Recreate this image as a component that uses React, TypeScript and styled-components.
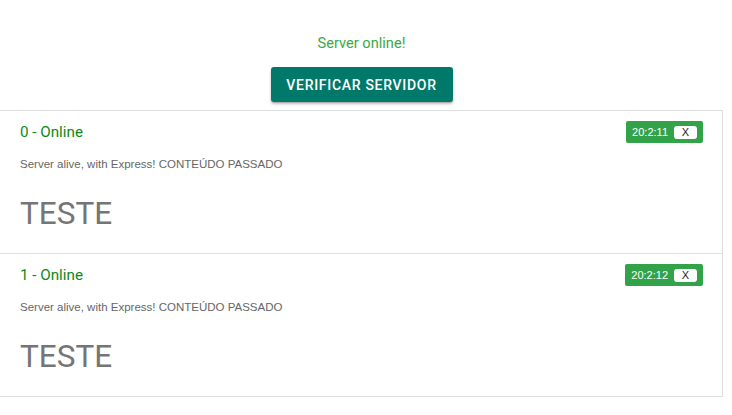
import React from "react";
import styled, { createGlobalStyle } from "styled-components";

const Global = createGlobalStyle`
  html, body { margin: 0; padding: 0; background: #fff; }
  body { font-family: Roboto, "Liberation Sans", Arial, sans-serif; }
`;

const Page = styled.div`
  width: 723px;
  display: flex;
  flex-direction: column;
  align-items: center;
`;

const Status = styled.div`
  margin-top: 34px;
  height: 18px;
  line-height: 18px;
  font-size: 14.6px;
  color: #3aa845;
  font-family: Roboto, sans-serif;
`;

const VerifyButton = styled.button`
  margin-top: 15px;
  width: 182px;
  height: 35px;
  border: none;
  border-radius: 3px;
  background: #00796b;
  color: #fff;
  font-family: Roboto, sans-serif;
  font-size: 14px;
  font-weight: 500;
  letter-spacing: 0.7px;
  text-transform: uppercase;
  box-shadow: 0 2px 3px rgba(0,0,0,0.25), 0 1px 1px rgba(0,0,0,0.14);
  cursor: pointer;
`;

const List = styled.ul`
  list-style: none;
  margin: 8px 0 0 -1px;
  padding: 0;
  width: 724px;
  border: 1px solid #dedede;
  box-sizing: border-box;
`;

const Item = styled.li<{ $last?: boolean }>`
  height: ${(p) => (p.$last ? "142px" : "143px")};
  padding: 10px 19px 0 20px;
  box-sizing: border-box;
  border-bottom: ${(p) => (p.$last ? "none" : "1px solid #dedede")};
  display: flex;
  flex-direction: column;
`;

const Header = styled.div`
  display: flex;
  align-items: center;
  justify-content: space-between;
  height: 22px;
`;

const Title = styled.span`
  font-family: Roboto, sans-serif;
  font-size: 15.2px;
  color: #0b8a16;
`;

const Badge = styled.span`
  display: inline-flex;
  align-items: center;
  gap: 6px;
  height: 22px;
  padding: 0 6px;
  box-sizing: border-box;
  background: #33a34a;
  color: #fff;
  border-radius: 2px;
  font-family: "Liberation Sans", Arial, sans-serif;
  font-size: 11px;
`;

const CloseButton = styled.button`
  width: 23px;
  height: 13px;
  padding: 0;
  border: none;
  border-radius: 3px;
  background: #fff;
  color: #222;
  font-family: "Liberation Sans", Arial, sans-serif;
  font-size: 11px;
  line-height: 13px;
  cursor: pointer;
`;

const Description = styled.p`
  margin: 14px 0 0 0;
  font-family: "Liberation Sans", Arial, sans-serif;
  font-size: 11.5px;
  color: #666;
  line-height: 14px;
`;

const Big = styled.div`
  margin-top: 25px;
  font-family: Roboto, sans-serif;
  font-size: 31.5px;
  line-height: 36px;
  color: #757575;
`;

const items = [
  { id: 0, time: "20:2:11" },
  { id: 1, time: "20:2:12" },
];

export default function App() {
  return (
    <>
      <Global />
      <Page>
        <Status>Server online!</Status>
        <VerifyButton>Verificar servidor</VerifyButton>
        <List>
          {items.map((it, i) => (
            <Item key={it.id} $last={i === items.length - 1}>
              <Header>
                <Title>{it.id} - Online</Title>
                <Badge>
                  {it.time}
                  <CloseButton>X</CloseButton>
                </Badge>
              </Header>
              <Description>Server alive, with Express! CONTEÚDO PASSADO</Description>
              <Big>TESTE</Big>
            </Item>
          ))}
        </List>
      </Page>
    </>
  );
}
